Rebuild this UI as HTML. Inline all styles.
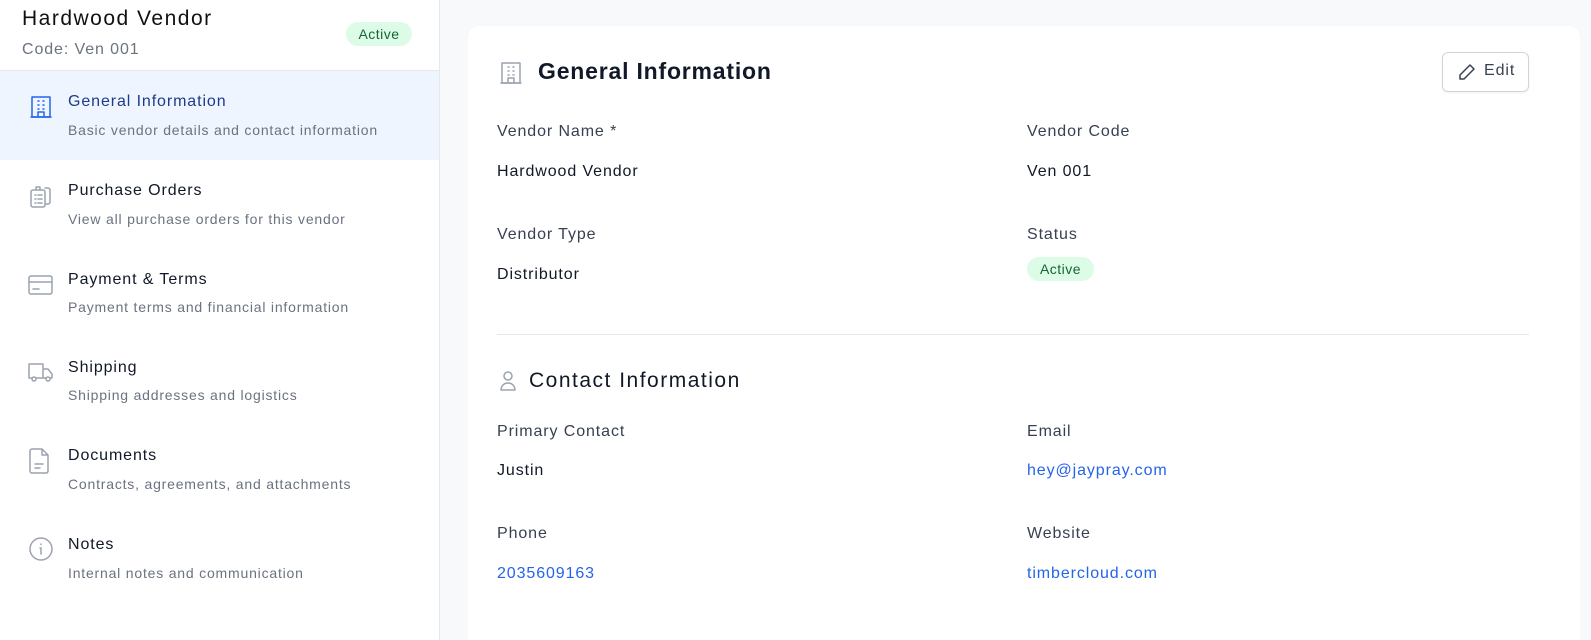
<!DOCTYPE html>
<html style="overflow:hidden"><head><style>
*{margin:0;padding:0;box-sizing:border-box}
html,body{width:1591px;height:640px;overflow:hidden}
body{background:#f8f9fb;font-family:"Liberation Sans",sans-serif;position:relative;color:#111827}
.abs{position:absolute;white-space:nowrap}
#side{position:absolute;left:0;top:0;width:440px;height:640px;background:#fff;border-right:1px solid #e5e7eb}
.t{font-size:16px;color:#111827;letter-spacing:0.9px}
.s{font-size:14px;color:#6b7280;letter-spacing:0.8px}
.lbl{font-size:16px;color:#374151;letter-spacing:0.9px}
.val{font-size:16px;color:#111827;letter-spacing:0.9px}
.lnk{font-size:16px;color:#2563eb;letter-spacing:0.9px}
.badge{background:#dcfce7;color:#166534;border-radius:12px;font-size:14px;text-align:center;letter-spacing:0.5px}
svg{position:absolute;fill:none;stroke-width:1.5;stroke-linecap:round;stroke-linejoin:round}
</style></head><body>
<div id="side">
<div class="abs" style="left:22px;top:7px;font-size:21px;color:#111;letter-spacing:1.5px">Hardwood Vendor</div>
<div class="abs" style="left:22px;top:41px;font-size:16px;color:#6b7280;letter-spacing:0.9px">Code: Ven 001</div>
<div class="abs badge" style="left:346px;top:22px;width:66px;height:24px;line-height:24px">Active</div>
<div class="abs" style="left:0;top:70px;width:439px;height:1px;background:#e5e7eb"></div>
<div class="abs" style="left:0;top:71px;width:439px;height:89px;background:#eef5ff"></div>

<svg style="left:30px;top:95px" width="22" height="24" viewBox="0 0 22 24" stroke="#2563eb"><rect x="2" y="2" width="18" height="20"/><path d="M1 22h20M8 22v-5h6v5M8 6h1M13 6h1M8 10h1M13 10h1M8 14h1M13 14h1"/></svg>
<div class="abs t" style="left:68px;top:93px;color:#1e3a8a">General Information</div>
<div class="abs s" style="left:68px;top:122px">Basic vendor details and contact information</div>

<svg style="left:28px;top:183px" width="26" height="27" viewBox="0 0 26 27" stroke="#9ca3af"><rect x="3" y="7" width="14" height="17" rx="2"/><path d="M8 7V4h4v3M17 5h3a2 2 0 0 1 2 2v12a2 2 0 0 1-2 2h-3M7 12h1M10 12h4M7 16h1M10 16h4M7 20h1M10 20h4"/></svg>
<div class="abs t" style="left:68px;top:182px">Purchase Orders</div>
<div class="abs s" style="left:68px;top:211px">View all purchase orders for this vendor</div>

<svg style="left:27px;top:273px" width="27" height="24" viewBox="0 0 27 24" stroke="#9ca3af"><rect x="2" y="3" width="23" height="18" rx="2"/><path d="M2 9h23M6 16h6"/></svg>
<div class="abs t" style="left:68px;top:271px">Payment &amp; Terms</div>
<div class="abs s" style="left:68px;top:299px">Payment terms and financial information</div>

<svg style="left:27px;top:360px" width="27" height="24" viewBox="0 0 27 24" stroke="#9ca3af"><path d="M2 4h14v14H2zM16 9h5l4 5v4h-9"/><circle cx="7" cy="19" r="2" fill="#fff"/><circle cx="21" cy="19" r="2" fill="#fff"/></svg>
<div class="abs t" style="left:68px;top:359px">Shipping</div>
<div class="abs s" style="left:68px;top:387px">Shipping addresses and logistics</div>

<svg style="left:28px;top:447px" width="24" height="28" viewBox="0 0 24 28" stroke="#9ca3af"><path d="M4 2h10l6 6v16a2 2 0 0 1-2 2H4a2 2 0 0 1-2-2V4a2 2 0 0 1 2-2zM14 2v6h6M7 17h8M7 21h5"/></svg>
<div class="abs t" style="left:68px;top:447px">Documents</div>
<div class="abs s" style="left:68px;top:476px">Contracts, agreements, and attachments</div>

<svg style="left:28px;top:536px" width="26" height="26" viewBox="0 0 26 26" stroke="#9ca3af"><circle cx="13" cy="13" r="11"/><path d="M13 12v6M12 12h1M13 8v.5"/></svg>
<div class="abs t" style="left:68px;top:536px">Notes</div>
<div class="abs s" style="left:68px;top:565px">Internal notes and communication</div>
</div>

<div class="abs" style="left:468px;top:26px;width:1112px;height:614px;background:#fff;border-radius:12px 12px 0 0"></div>
<svg style="left:500px;top:61px" width="22" height="24" viewBox="0 0 22 24" stroke="#9ca3af"><rect x="2" y="2" width="18" height="20"/><path d="M1 22h20M8 22v-5h6v5M8 6h1M13 6h1M8 10h1M13 10h1M8 14h1M13 14h1"/></svg>
<div class="abs" style="left:538px;top:58px;font-size:23px;font-weight:bold;color:#111827;letter-spacing:0.8px">General Information</div>
<div class="abs" style="left:1442px;top:52px;width:87px;height:40px;border:1px solid #d1d5db;border-radius:6px;box-shadow:0 1px 2px rgba(0,0,0,.06);background:#fff"></div>
<svg style="left:1458px;top:63px" width="18" height="18" viewBox="0 0 18 18" stroke="#374151"><path d="M12 2l4 4L6 16H2v-4z"/></svg>
<div class="abs" style="left:1484px;top:62px;font-size:16px;color:#374151;letter-spacing:0.9px">Edit</div>

<div class="abs lbl" style="left:497px;top:123px">Vendor Name *</div>
<div class="abs val" style="left:497px;top:163px">Hardwood Vendor</div>
<div class="abs lbl" style="left:1027px;top:123px">Vendor Code</div>
<div class="abs val" style="left:1027px;top:163px">Ven 001</div>
<div class="abs lbl" style="left:497px;top:226px">Vendor Type</div>
<div class="abs val" style="left:497px;top:266px">Distributor</div>
<div class="abs lbl" style="left:1027px;top:226px">Status</div>
<div class="abs badge" style="left:1027px;top:257px;width:67px;height:24px;line-height:24px">Active</div>
<div class="abs" style="left:497px;top:334px;width:1032px;height:1px;background:#e5e7eb"></div>

<svg style="left:498px;top:370px" width="20" height="22" viewBox="0 0 20 22" stroke="#9ca3af"><circle cx="10" cy="6" r="4"/><path d="M3 20c0-4 3-7 7-7s7 3 7 7z"/></svg>
<div class="abs" style="left:529px;top:369px;font-size:21px;color:#111827;letter-spacing:1.5px">Contact Information</div>

<div class="abs lbl" style="left:497px;top:423px">Primary Contact</div>
<div class="abs val" style="left:497px;top:462px">Justin</div>
<div class="abs lbl" style="left:1027px;top:423px">Email</div>
<div class="abs lnk" style="left:1027px;top:462px">hey@jaypray.com</div>
<div class="abs lbl" style="left:497px;top:525px">Phone</div>
<div class="abs lnk" style="left:497px;top:565px">2035609163</div>
<div class="abs lbl" style="left:1027px;top:525px">Website</div>
<div class="abs lnk" style="left:1027px;top:565px">timbercloud.com</div>
</body></html>
